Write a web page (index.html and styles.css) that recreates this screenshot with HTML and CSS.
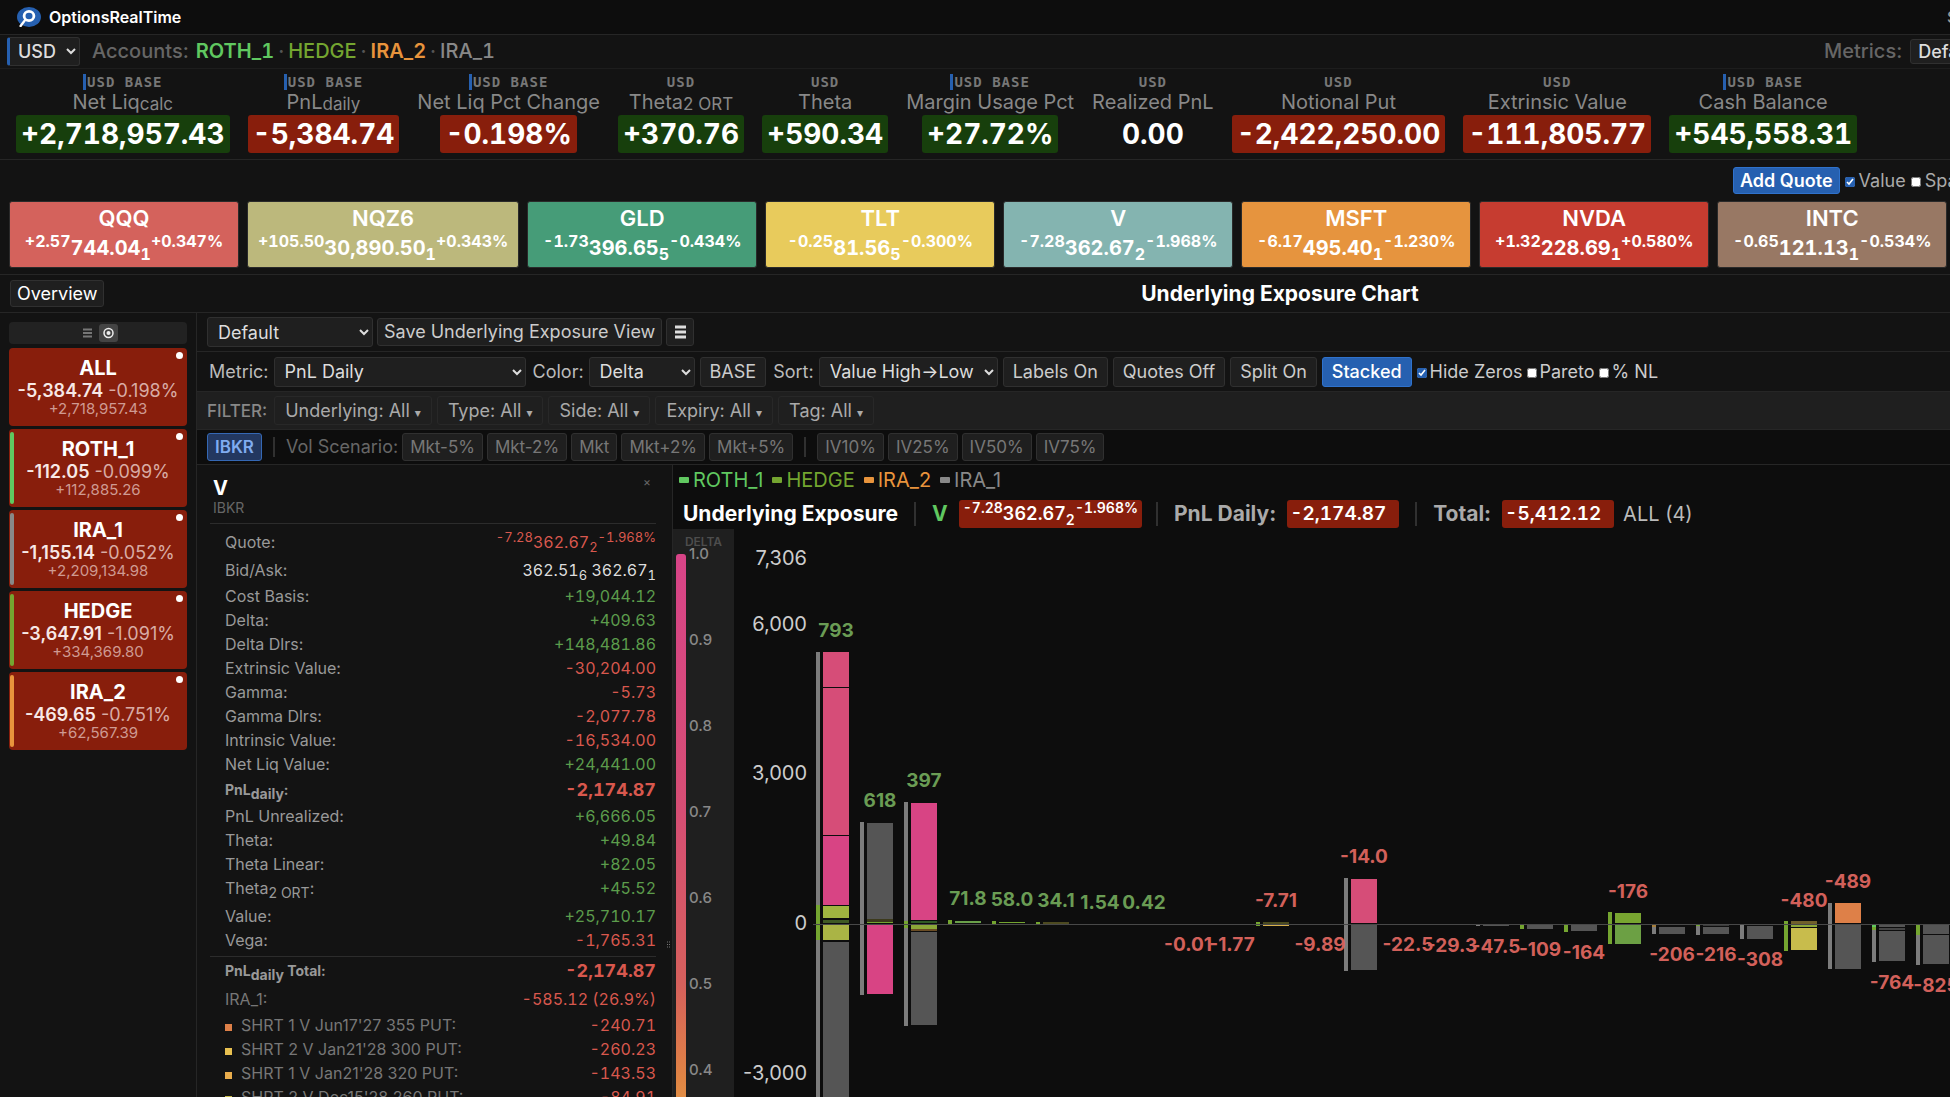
FILE: index.html
```html
<!DOCTYPE html>
<html lang="en">
<head>
<meta charset="utf-8">
<title>OptionsRealTime</title>
<link rel="stylesheet" href="styles.css">
</head>
<body>
<div class="app">
  <header class="brand">
    <svg class="logo" width="24" height="20" viewBox="0 0 24 20" aria-hidden="true">
      <ellipse cx="12" cy="10" rx="12" ry="10" fill="#2660b0"/>
      <ellipse cx="12" cy="9" rx="4.9" ry="4.6" fill="none" stroke="#fff" stroke-width="2.8"/>
      <path d="M8.4 12.6 3.6 19" stroke="#fff" stroke-width="2.4" stroke-linecap="round"/>
    </svg>
    <span>OptionsRealTime</span>
    <span class="status">S</span>
  </header>

  <div class="accounts">
    <select class="currency" aria-label="Currency"><option>USD</option></select>
    <span class="muted">Accounts:</span>
    <nav class="account-list">
      <span class="roth">ROTH_1</span><i>·</i><span class="hedge">HEDGE</span><i>·</i><span class="ira2">IRA_2</span><i>·</i><span class="ira1">IRA_1</span>
    </nav>
    <div class="metrics-picker">
      <label for="metrics">Metrics:</label>
      <select id="metrics"><option>Default</option></select>
    </div>
  </div>

  <section class="metrics">
    <div class="metric"><small class="base">USD BASE</small><span>Net Liq<sub>calc</sub></span><b class="up">+2,718,957.43</b></div>
    <div class="metric"><small class="base">USD BASE</small><span>PnL<sub>daily</sub></span><b class="down">-5,384.74</b></div>
    <div class="metric"><small class="base">USD BASE</small><span>Net Liq Pct Change</span><b class="down">-0.198%</b></div>
    <div class="metric"><small>USD</small><span>Theta<sub>2 ORT</sub></span><b class="up">+370.76</b></div>
    <div class="metric"><small>USD</small><span>Theta</span><b class="up">+590.34</b></div>
    <div class="metric"><small class="base">USD BASE</small><span>Margin Usage Pct</span><b class="up">+27.72%</b></div>
    <div class="metric"><small>USD</small><span>Realized PnL</span><b>0.00</b></div>
    <div class="metric"><small>USD</small><span>Notional Put</span><b class="down">-2,422,250.00</b></div>
    <div class="metric"><small>USD</small><span>Extrinsic Value</span><b class="down">-111,805.77</b></div>
    <div class="metric"><small class="base">USD BASE</small><span>Cash Balance</span><b class="up">+545,558.31</b></div>
  </section>

  <section class="quotes">
    <div class="quote-tools">
      <div class="quote-actions">
        <button class="primary">Add Quote</button>
        <label><input type="checkbox" checked>Value</label>
        <label><input type="checkbox">Spark</label>
      </div>
    </div>
    <div class="tiles">
      <article class="tile qqq"><h3>QQQ</h3><p class="quote"><sup>+2.57</sup>744.04<sub>1</sub><sup>+0.347%</sup></p></article>
      <article class="tile nqz"><h3>NQZ6</h3><p class="quote"><sup>+105.50</sup>30,890.50<sub>1</sub><sup>+0.343%</sup></p></article>
      <article class="tile gld"><h3>GLD</h3><p class="quote"><sup>-1.73</sup>396.65<sub>5</sub><sup>-0.434%</sup></p></article>
      <article class="tile tlt"><h3>TLT</h3><p class="quote"><sup>-0.25</sup>81.56<sub>5</sub><sup>-0.300%</sup></p></article>
      <article class="tile visa"><h3>V</h3><p class="quote"><sup>-7.28</sup>362.67<sub>2</sub><sup>-1.968%</sup></p></article>
      <article class="tile msft"><h3>MSFT</h3><p class="quote"><sup>-6.17</sup>495.40<sub>1</sub><sup>-1.230%</sup></p></article>
      <article class="tile nvda"><h3>NVDA</h3><p class="quote"><sup>+1.32</sup>228.69<sub>1</sub><sup>+0.580%</sup></p></article>
      <article class="tile intc"><h3>INTC</h3><p class="quote"><sup>-0.65</sup>121.13<sub>1</sub><sup>-0.534%</sup></p></article>
    </div>
  </section>

  <div class="titlebar">
    <button class="overview">Overview</button>
    <h1>Underlying Exposure Chart</h1>
  </div>

  <div class="workspace">
    <aside class="sidebar">
      <div class="view-toggle">
        <button aria-label="List"><svg width="9" height="10" viewBox="0 0 9 10"><path d="M0 1.5h9M0 5h9M0 8.5h9" stroke="#777" stroke-width="2"/></svg></button>
        <button class="on" aria-label="Cards"><svg width="11" height="12" viewBox="0 0 11 12"><circle cx="5.500" cy="6" r="4.500" fill="none" stroke="#eee" stroke-width="1.500"/><circle cx="5.500" cy="6" r="2" fill="#eee"/></svg></button>
      </div>
      <article class="card"><h2>ALL</h2><p><b>-5,384.74</b> -0.198%</p><small>+2,718,957.43</small></article>
      <article class="card c-roth"><h2>ROTH_1</h2><p><b>-112.05</b> -0.099%</p><small>+112,885.26</small></article>
      <article class="card c-ira1"><h2>IRA_1</h2><p><b>-1,155.14</b> -0.052%</p><small>+2,209,134.98</small></article>
      <article class="card c-hedge"><h2>HEDGE</h2><p><b>-3,647.91</b> -1.091%</p><small>+334,369.80</small></article>
      <article class="card c-ira2"><h2>IRA_2</h2><p><b>-469.65</b> -0.751%</p><small>+62,567.39</small></article>
    </aside>

    <main class="main">
      <div class="bar views">
        <select class="view-select" aria-label="View"><option>Default</option></select>
        <button>Save Underlying Exposure View</button>
        <button class="menu" aria-label="Menu"><svg width="11" height="14" viewBox="0 0 11 14"><path d="M0 2h11M0 7h11M0 12h11" stroke="#ddd" stroke-width="3"/></svg></button>
      </div>
      <div class="bar options">
        <label for="metric">Metric:</label><select id="metric" class="w-metric"><option>PnL Daily</option></select>
        <label for="color">Color:</label><select id="color" class="w-color"><option>Delta</option></select>
        <button>BASE</button>
        <label for="sort">Sort:</label><select id="sort" class="w-sort"><option>Value High→Low</option></select>
        <button>Labels On</button><button>Quotes Off</button><button>Split On</button><button class="primary">Stacked</button>
        <div class="checks">
          <label><input type="checkbox" checked>Hide Zeros</label>
          <label><input type="checkbox">Pareto</label>
          <label><input type="checkbox">% NL</label>
        </div>
      </div>
      <div class="bar filter">
        <span>FILTER:</span>
        <button>Underlying: All <i>▾</i></button><button>Type: All <i>▾</i></button><button>Side: All <i>▾</i></button><button>Expiry: All <i>▾</i></button><button>Tag: All <i>▾</i></button>
      </div>
      <div class="bar scenario">
        <button class="ibkr">IBKR</button><span class="rule"></span><span class="caption">Vol Scenario:</span>
        <button>Mkt-5%</button><button>Mkt-2%</button><button>Mkt</button><button>Mkt+2%</button><button>Mkt+5%</button>
        <span class="rule"></span>
        <button>IV10%</button><button>IV25%</button><button>IV50%</button><button>IV75%</button>
      </div>

      <div class="split">
        <section class="detail">
          <div class="detail-head">
            <div><h2>V</h2><small>IBKR</small></div>
            <button aria-label="Close">×</button>
          </div>
          <table>
            <tbody>
              <tr class="tall neg"><th>Quote:</th><td class="quote"><sup>-7.28</sup>362.67<sub>2</sub><sup>-1.968%</sup></td></tr>
              <tr class="tall"><th>Bid/Ask:</th><td class="quote plain">362.51<sub>6</sub> 362.67<sub>1</sub></td></tr>
              <tr class="pos"><th>Cost Basis:</th><td>+19,044.12</td></tr>
              <tr class="pos"><th>Delta:</th><td>+409.63</td></tr>
              <tr class="pos"><th>Delta Dlrs:</th><td>+148,481.86</td></tr>
              <tr class="neg"><th>Extrinsic Value:</th><td>-30,204.00</td></tr>
              <tr class="neg"><th>Gamma:</th><td>-5.73</td></tr>
              <tr class="neg"><th>Gamma Dlrs:</th><td>-2,077.78</td></tr>
              <tr class="neg"><th>Intrinsic Value:</th><td>-16,534.00</td></tr>
              <tr class="pos"><th>Net Liq Value:</th><td>+24,441.00</td></tr>
              <tr class="tall strong neg"><th>PnL<sub>daily</sub>:</th><td>-2,174.87</td></tr>
              <tr class="pos"><th>PnL Unrealized:</th><td>+6,666.05</td></tr>
              <tr class="pos"><th>Theta:</th><td>+49.84</td></tr>
              <tr class="pos"><th>Theta Linear:</th><td>+82.05</td></tr>
              <tr class="tall high pos"><th>Theta<sub>2 ORT</sub>:</th><td>+45.52</td></tr>
              <tr class="pos"><th>Value:</th><td>+25,710.17</td></tr>
              <tr class="neg"><th>Vega:</th><td>-1,765.31</td></tr>
            </tbody>
          </table>
          <table class="totals">
            <tbody>
              <tr class="tall strong neg"><th>PnL<sub>daily</sub> Total:</th><td>-2,174.87</td></tr>
              <tr class="tall dim neg"><th>IRA_1:</th><td>-585.12 (26.9%)</td></tr>
              <tr class="dim neg"><th><i class="k1"></i>SHRT 1 V Jun17'27 355 PUT:</th><td>-240.71</td></tr>
              <tr class="dim neg"><th><i class="k2"></i>SHRT 2 V Jan21'28 300 PUT:</th><td>-260.23</td></tr>
              <tr class="dim neg"><th><i class="k3"></i>SHRT 1 V Jan21'28 320 PUT:</th><td>-143.53</td></tr>
              <tr class="dim neg"><th><i class="k4"></i>SHRT 2 V Dec15'28 260 PUT:</th><td>-84.91</td></tr>
            </tbody>
          </table>
        </section>
        <div class="grip" aria-hidden="true"><svg width="3" height="8" viewBox="0 0 3 8"><path d="M0 1h3M0 3.500h3M0 6h3" stroke="#777" stroke-width="1" stroke-dasharray="1 1"/></svg></div>
        <section class="exposure">
          <div class="legend">
            <span class="roth">ROTH_1</span><span class="hedge">HEDGE</span><span class="ira2">IRA_2</span><span class="ira1">IRA_1</span>
          </div>
          <div class="chart-head">
            <h2>Underlying Exposure</h2><span class="rule"></span>
            <b class="symbol">V</b><span class="pill quote"><sup>-7.28</sup>362.67<sub>2</sub><sup>-1.968%</sup></span><span class="rule"></span>
            <b>PnL Daily:</b><b class="pill num">-2,174.87</b><span class="rule"></span>
            <b>Total:</b><b class="pill num">-5,412.12</b><span class="scope">ALL (4)</span>
          </div>
          <div class="plot">
            <div class="scale">
              <h3>DELTA</h3>
              <div class="scale-body">
                <div class="ramp"></div>
                <ol><li>1.0</li><li>0.9</li><li>0.8</li><li>0.7</li><li>0.6</li><li>0.5</li><li>0.4</li><li>0.3</li></ol>
              </div>
            </div>
            <svg id="chart" class="chart" role="img" aria-label="PnL Daily by underlying"></svg>
          </div>
        </section>
      </div>
    </main>
  </div>
</div>
<script src="chart.js"></script>
</body>
</html>
```
FILE: styles.css
```css
* { box-sizing: border-box; }
body {
  margin: 0;
  height: 100vh;
  overflow: hidden;
  background: #131313;
  color: #ccc;
  font: 18px/24px Inter, "Noto Sans", sans-serif;
}
h1, h2, h3, p, ol { margin: 0; padding: 0; }
i { font-style: normal; }
sub, sup { line-height: 0; }
.app { height: 100%; display: flex; flex-direction: column; white-space: nowrap; }

button, select {
  font: inherit;
  color: #ccc;
  background: #1f1f1f;
  border: 1px solid #303030;
  border-radius: 3px;
}
button { padding: 0 9px; flex: none; }
select { padding: 0 6px; color: #ddd; flex: none; }
input[type="checkbox"] { width: 10px; height: 10px; margin: 0 4px 0 0; accent-color: #2660b0; }
.primary { background: #2660b0; border-color: #2f72cc; color: #fff; font-weight: 500; }

.roth { color: #60c860; }
.hedge { color: #74a530; }
.ira2 { color: #e8943c; }
.ira1 { color: #888; }

/* top bars */
.brand {
  flex: none; height: 35px; display: flex; align-items: center; gap: 8px;
  padding-left: 17px; background: #0d0d0d; border-bottom: 1px solid #262626;
  color: #fff; font-size: 16px; font-weight: 600;
}
.status { margin-left: auto; flex: 0 0 3px; min-width: 0; color: #999; font-weight: 500; }
.accounts {
  flex: none; height: 34px; display: flex; align-items: center; padding: 0 0 1px 7px;
  border-bottom: 1px solid #1d1d1d; font-size: 20px; font-weight: 500;
}
.currency { width: 73px; height: 29px; margin-right: 12px; padding: 0 4px; border-left: 3px solid #2660b0; font-size: 18px; }
.muted { margin-right: 7px; color: #666; }
.account-list { display: flex; font-variant-numeric: tabular-nums; }
.account-list i { width: 14px; text-align: center; color: #555; }
.account-list .roth { font-weight: 600; }
.account-list .ira2 { font-weight: 600; }
.metrics-picker { margin-left: auto; flex: 0 0 126px; min-width: 0; display: flex; align-items: center; gap: 8px; color: #666; }
.metrics-picker select { height: 25px; width: 110px; padding: 0 3px; font-size: 18px; }

.metrics { flex: none; height: 91px; display: flex; gap: 18px; padding: 5px 16px; border-bottom: 1px solid #262626; }
.metric { display: flex; flex-direction: column; align-items: center; color: #888; font-size: 20px; }
.metric small { height: 16px; margin-bottom: 1px; color: #777; font: bold 14px/16px "DejaVu Sans Mono", monospace; letter-spacing: 1px; }
.metric small.base { border-left: 3px solid #2660b0; padding-left: 1px; }
.metric span { line-height: 23px; }
.metric sub { font-size: 17px; vertical-align: baseline; position: relative; top: 1px; }
.metric b {
  margin-top: 1px; padding: 1px 5px 0; border-radius: 3px; color: #fff;
  font-size: 28px; font-weight: 700; line-height: 37px; font-variant-numeric: tabular-nums;
}
.up { background: #173f0c; }
.down { background: #881e0c; }

/* quotes */
.quotes { flex: none; height: 115px; border-bottom: 1px solid #262626; }
.quote-tools { height: 41px; display: flex; align-items: center; justify-content: flex-end; }
.quote-actions { flex: 0 0 217px; min-width: 0; display: flex; align-items: center; gap: 5px; color: #aaa; }
.quote-actions .primary { height: 27px; padding: 0 6px; font-weight: 600; line-height: 24px; }
.tiles { display: flex; gap: 8px; padding: 0 9px; }
.tile {
  flex: none; min-width: 230px; height: 67px; padding: 4px 10px; border: 1px solid #2a2a2a; border-radius: 3px;
  color: #fff; text-align: center; font-weight: 700;
}
.tile h3 { font-size: 22px; line-height: 24px; font-weight: 600; }
.quote { font-variant-numeric: tabular-nums; }
.tile .quote { font-size: 20px; line-height: 36px; }
.tile sup, .tile sub { font-size: 16px; }
.qqq { background: #d4625c; }
.nqz { background: #bcb87c; }
.gld { background: #469c78; }
.tlt { background: #e8cb5c; }
.visa { background: #84b4b0; }
.msft { background: #e6943e; }
.nvda { background: #c63c30; }
.intc { background: #987864; }

.titlebar {
  flex: none; min-width: 2560px; height: 38px; display: grid; grid-template-columns: 1fr auto 1fr; align-items: center;
  padding: 0 10px; border-bottom: 1px solid #262626;
}
.titlebar h1 { color: #fff; font-size: 21px; font-weight: 700; }
.overview { justify-self: start; height: 27px; padding: 0 6px; color: #fff; }

/* sidebar */
.workspace { flex: 1; min-height: 0; display: flex; }
.sidebar { flex: 0 0 197px; padding: 9px; border-right: 1px solid #262626; display: flex; flex-direction: column; gap: 3px; }
.view-toggle { display: flex; justify-content: center; align-items: center; gap: 2px; height: 22px; margin-bottom: 1px; border-radius: 4px; background: #222; }
.view-toggle button { width: 19px; height: 18px; padding: 0; border: 0; background: none; display: grid; place-items: center; }
.view-toggle .on { background: #444; }
.card { position: relative; height: 78px; padding: 8px 0; border-radius: 4px; background: #881e0c; text-align: center; color: #d9aca5; }
.card h2 { color: #fff; font-size: 20px; line-height: 24px; font-weight: 700; }
.card p { font-size: 18px; line-height: 21px; }
.card b { color: #f7e8e6; font-weight: 600; }
.card small { display: block; font-size: 15px; line-height: 16px; color: #cf9a92; }
.card::after { content: ""; position: absolute; top: 4px; right: 4px; width: 7px; height: 7px; border-radius: 50%; background: #fff; }
.card::before { content: ""; position: absolute; top: 3px; bottom: 3px; left: 1px; width: 4px; border-radius: 2px; }
.c-roth::before { background: #60c860; }
.c-ira1::before { background: #888; }
.c-hedge::before { background: #74a530; }
.c-ira2::before { background: #e8943c; }

/* toolbars */
.main { flex: 1; min-width: 0; display: flex; flex-direction: column; }
.bar { flex: none; display: flex; align-items: center; padding-left: 10px; border-bottom: 1px solid #262626; }
.views { height: 39px; gap: 4px; }
.views button { height: 28px; padding: 0 6px; }
.view-select { width: 166px; height: 30px; }
.views .menu { width: 28px; padding: 0; display: grid; place-items: center; }
.options { height: 40px; gap: 5px; }
.options button, .options select { height: 30px; }
.options > label { padding-left: 2px; color: #bbb; }
.w-metric { width: 252px; }
.w-color { width: 106px; }
.w-sort { width: 179px; }
.checks { display: flex; gap: 4px; }
.checks input[type="checkbox"] { margin-right: 3px; }
.filter { height: 38px; gap: 5px; background: #1f1f1f; color: #888; font-weight: 500; font-size: 17px; }
.filter span { margin-right: 2px; }
.filter button { height: 29px; padding: 0 10px; color: #aaa; border-color: #282828; font-size: 18px; font-weight: 400; }
.filter i { font: 12px "DejaVu Sans", sans-serif; }
.scenario { height: 35px; gap: 4px; background: #0d0d0d; color: #666; }
.scenario button { height: 28px; padding: 0 7px; color: #777; font-size: 17px; }
.scenario .ibkr { background: #233860; border-color: #3568b4; color: #80acf0; font-weight: 600; }
.rule { flex: none; width: 2px; height: 24px; background: #303030; }
.scenario .rule { height: 20px; margin: 0 7px; }

/* detail panel */
.split { flex: 1; min-height: 0; display: flex; overflow: hidden; }
.detail { flex: 0 0 459px; padding-left: 13px; overflow: hidden; font-size: 16px; }
.detail-head { display: flex; justify-content: space-between; align-items: flex-start; height: 59px; padding: 11px 3px 0; border-bottom: 1px solid #2c2c2c; }
.detail-head h2 { color: #fff; font-size: 20px; line-height: 24px; font-weight: 700; }
.detail-head small { display: block; font-size: 14px; line-height: 16px; color: #666; }
.detail-head button { margin-right: 2px; padding: 0; border: 0; background: none; color: #666; font-size: 12px; line-height: 12px; }
table { width: 100%; border-collapse: collapse; margin-top: 4px; }
th, td { height: 24px; padding: 0; line-height: 24px; }
th { padding-left: 15px; text-align: left; font-weight: 400; color: #999; }
td { text-align: right; font-variant-numeric: tabular-nums; }
.tall th, .tall td { height: 28px; }
.high th, .high td { vertical-align: top; }
.detail sub { font-size: 14px; }
.detail sup, .detail td sub { font-size: 13px; }
.pos td { color: #5c9c4c; }
.neg td { color: #d8584e; }
td.plain { color: #ddd; }
.strong th { font-size: 14px; font-weight: 700; }
.strong td { font-size: 18px; font-weight: 700; }
.dim th { color: #777; }
.totals { border-top: 1px solid #2c2c2c; }
.totals i { display: inline-block; width: 7px; height: 7px; margin-right: 9px; }
.k1 { background: #de8048; }
.k2 { background: #e8c050; }
.k3 { background: #e8ac4c; }
.k4 { background: #c8bc4c; }
.grip { flex: 0 0 17px; border-right: 1px solid #262626; display: grid; align-items: end; justify-content: end; padding: 0 2px 148px 0; }

/* chart */
.exposure { flex: 1; min-width: 0; display: flex; flex-direction: column; background: #0d0d0d; }
.legend { flex: none; display: flex; gap: 9px; height: 30px; padding-left: 6px; align-items: center; font-size: 20px; }
.legend span { display: flex; align-items: center; gap: 4px; }
.legend span::before { content: ""; width: 10px; height: 6px; border-radius: 1px; background: currentColor; }
.chart-head { flex: none; display: flex; align-items: center; height: 34px; padding: 3px 0 0 10px; gap: 16px; font-size: 21px; color: #aaa; }
.chart-head h2 { color: #fff; font-size: 21px; font-weight: 700; }
.chart-head b { font-weight: 700; }
.chart-head .symbol { color: #60c860; }
.pill { height: 28px; margin-left: -5px; padding: 0 4px; border-radius: 3px; background: #881e0c; color: #fff; line-height: 28px; }
.pill.quote { margin-right: -2px; font-size: 18px; font-weight: 600; }
.pill sup, .pill sub { font-size: 14px; }
.chart-head .num { min-width: 112px; margin-left: -5px; padding: 0 3px; font-size: 19px; font-weight: 600; font-variant-numeric: tabular-nums; }
.scope { margin-left: -7px; color: #bbb; font-size: 20px; }
.plot { flex: 1; min-height: 0; display: flex; }
.scale { flex: 0 0 61px; background: #1f1f1f; overflow: hidden; }
.scale h3 { padding-top: 5px; height: 25px; line-height: 16px; text-align: center; font-size: 12px; font-weight: 600; color: #4d4d4d; }
.scale-body { display: flex; gap: 3px; padding-left: 3px; }
.ramp { width: 10px; height: 860px; border-radius: 3px; background: linear-gradient(#d84488, #d64e74 30%, #d6605c 50%, #e08444 61%, #e8c050 75%, #6ca044); }
.scale ol { list-style: none; font-size: 15px; font-weight: 500; color: #888; margin-top: -10px; }
.scale li { height: 86px; line-height: 20px; }
.chart { flex: 1; min-width: 0; height: 100%; overflow: hidden; }
.chart text { font-size: 19px; text-anchor: middle; font-weight: 700; }
.chart .axis { text-anchor: end; font-size: 20px; font-weight: 400; fill: #ccc; }
```
FILE: chart.js
```js
// Bars are stacked segments [from, to, colour] in pixels from the zero line; negative is up.
const ZERO = 395, FIRST = 89, PITCH = 44;
const GAIN = '#6a9c54', LOSS = '#d2605a', GREY = '#555', ROSE = '#d64d78', PINK = '#d84484', LEAF = '#74a530', SLATE = '#7c7c7c';
const bars = [
  { t: '793', y: -287, s: [[-272, 200, SLATE], [-19, 16, LEAF]], b: [[-272, -237, ROSE], [-236, -89, ROSE], [-88, -19, PINK], [-18, -6, '#a0b440'], [-4, -1, '#3f5a24'], [1, 16, '#aab445'], [18, 200, GREY]] },
  { t: '618', y: -117, s: [[-102, 71, SLATE]], b: [[-101, -5, GREY], [-5, -2, '#3c3a1c'], [-2, -1, LEAF], [1, 70, PINK]] },
  { t: '397', y: -137, s: [[-122, 102, SLATE], [-3, 4, LEAF]], b: [[-121, -4, PINK], [-3, -1, '#2f5a24'], [1, 5, '#8ca838'], [5, 7, '#6a4c24'], [8, 101, GREY]] },
  { t: '71.8', y: -19, s: [[-4, 0, LEAF]], b: [[-3, -1, '#6aa04a']] },
  { t: '58.0', y: -18, s: [[-3, 0, LEAF]], b: [[-2, -1, LEAF]] },
  { t: '34.1', y: -17, s: [[-2, 0, LEAF]], b: [[-2, 0, '#4d4a20']] },
  { t: '1.54', y: -15, s: [], b: [] },
  { t: '0.42', y: -15, s: [], b: [] },
  { t: '-0.01', y: 27, s: [], b: [] },
  { t: '-1.77', y: 27, s: [], b: [] },
  { t: '-7.71', y: -17, s: [[-2, 2, LEAF]], b: [[-2, 0, '#4a4a1e'], [1, 2, '#d8b04a']] },
  { t: '-9.89', y: 27, s: [], b: [] },
  { t: '-14.0', y: -61, s: [[-46, 47, SLATE]], b: [[-45, -1, ROSE], [1, 46, GREY]] },
  { t: '-22.5', y: 27, s: [], b: [] },
  { t: '-29.3', y: 28, s: [[0, 1, '#3f5a24']], b: [[0, 1, '#333022']] },
  { t: '-47.5', y: 29, s: [[0, 2, SLATE]], b: [[1, 2, GREY]] },
  { t: '-109', y: 32, s: [[0, 5, LEAF]], b: [[1, 5, GREY]] },
  { t: '-164', y: 35, s: [[0, 8, LEAF]], b: [[1, 7, GREY]] },
  { t: '-176', y: -26, s: [[-12, 20, LEAF]], b: [[-11, -1, '#78a530'], [1, 20, '#6ca044']] },
  { t: '-206', y: 37, s: [[0, 10, SLATE], [1, 3, '#a8803c']], b: [[3, 10, GREY]] },
  { t: '-216', y: 37, s: [[0, 11, SLATE], [0, 2, LEAF]], b: [[0, 2, '#3a3a3a'], [3, 10, GREY]] },
  { t: '-308', y: 42, s: [[0, 15, SLATE]], b: [[2, 15, GREY]] },
  { t: '-480', y: -17, s: [[-3, 27, LEAF]], b: [[-3, 0, '#70602a'], [1, 3, '#8ca838'], [4, 26, '#c8bc4c']] },
  { t: '-489', y: -36, s: [[-21, 45, SLATE]], b: [[-21, -1, '#de8048'], [1, 45, GREY]] },
  { t: '-764', y: 65, s: [[0, 38, SLATE], [0, 3, '#60c860'], [3, 6, LEAF]], b: [[1, 3, GREY], [4, 6, '#444'], [7, 37, GREY]] },
  { t: '-825', y: 68, s: [[0, 41, SLATE], [0, 11, LEAF]], b: [[1, 10, GREY], [11, 40, GREY]] }
];
const rect = (x, w, [a, b, c]) => `<rect x="${x}" y="${ZERO + a}" width="${w}" height="${b - a}" fill="${c}"/>`;
let out = '';
for (const [value, y] of [['7,306', 36], ['6,000', 102], ['3,000', 251], ['0', 401], ['-3,000', 551]]) {
  out += `<text class="axis" x="73" y="${y}">${value}</text>`;
}
bars.forEach((bar, i) => {
  const x = FIRST + i * PITCH;
  out += bar.s.map(s => rect(x - 7, 4, s)).join('') + bar.b.map(b => rect(x, 26, b)).join('');
});
out += `<rect x="79" y="${ZERO}" width="100%" height="1" fill="#484848"/>`;
bars.forEach((bar, i) => {
  out += `<text x="${FIRST + i * PITCH + 13}" y="${ZERO + bar.y}" fill="${bar.t[0] === '-' ? LOSS : GAIN}">${bar.t}</text>`;
});
document.getElementById('chart').innerHTML = out;
```
